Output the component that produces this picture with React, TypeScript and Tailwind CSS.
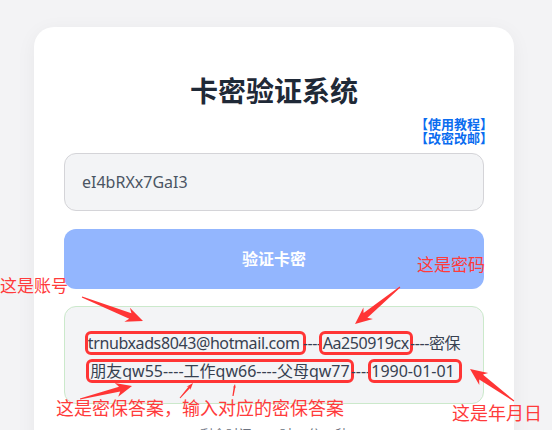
import React from "react";

type Pt = [number, number];

function arrowPoints(tail: Pt, tip: Pt, headLen: number, headW: number, neckW: number, tailW: number): string {
  const dx = tip[0] - tail[0];
  const dy = tip[1] - tail[1];
  const len = Math.hypot(dx, dy);
  const ux = dx / len;
  const uy = dy / len;
  const nx = -uy;
  const ny = ux;
  const bx = tip[0] - ux * headLen;
  const by = tip[1] - uy * headLen;
  const sx = tip[0] - ux * headLen * 0.8;
  const sy = tip[1] - uy * headLen * 0.8;
  const pts: Pt[] = [
    [tail[0] + (nx * tailW) / 2, tail[1] + (ny * tailW) / 2],
    [sx + (nx * neckW) / 2, sy + (ny * neckW) / 2],
    [bx + (nx * headW) / 2, by + (ny * headW) / 2],
    tip,
    [bx - (nx * headW) / 2, by - (ny * headW) / 2],
    [sx - (nx * neckW) / 2, sy - (ny * neckW) / 2],
    [tail[0] - (nx * tailW) / 2, tail[1] - (ny * tailW) / 2],
  ];
  return pts.map((p) => `${p[0].toFixed(1)},${p[1].toFixed(1)}`).join(" ");
}

const RED = "#ff3535";

function Arrows() {
  const arrows: { tail: Pt; tip: Pt; hl: number; hw: number; nw: number; tw: number }[] = [
    { tail: [82, 297], tip: [143, 321], hl: 17, hw: 15, nw: 6, tw: 1 },
    { tail: [400, 287], tip: [355, 324], hl: 17, hw: 15, nw: 6, tw: 1 },
    { tail: [80, 399], tip: [132, 386], hl: 16, hw: 14, nw: 5, tw: 1 },
    { tail: [180, 398], tip: [193, 383], hl: 7, hw: 5, nw: 2, tw: 1 },
    { tail: [233, 396], tip: [235, 384], hl: 4, hw: 3, nw: 1.6, tw: 1.2 },
    { tail: [514, 401], tip: [470, 369], hl: 17, hw: 15, nw: 6, tw: 1 },
  ];
  return (
    <svg className="pointer-events-none absolute left-0 top-0" width={552} height={430} viewBox="0 0 552 430">
      {arrows.map((a, i) => (
        <polygon key={i} points={arrowPoints(a.tail, a.tip, a.hl, a.hw, a.nw, a.tw)} fill={RED} />
      ))}
    </svg>
  );
}

export default function App() {
  const box = "inline-block leading-[18px] rounded-[3px] outline-3 outline-[#ff3535]";
  const cjk = { fontFamily: '"Noto Sans CJK SC", sans-serif' };
  return (
    <div
      className="relative h-[430px] w-[552px] overflow-hidden bg-[#f3f3f5]"
      style={{ fontFamily: '"Noto Sans", "Noto Sans CJK SC", sans-serif' }}
    >
      <div className="ml-[34px] mt-[27px] w-[480px] rounded-[20px] bg-white px-[30px] pb-[40px] pt-[46px] shadow-[0_4px_20px_rgba(0,0,0,0.05)]">
        <h1 className="text-center text-[28px] font-bold leading-[36px] text-[#1f2937]">卡密验证系统</h1>
        <div
          className="-mr-[9px] mt-[8px] flex flex-col items-end text-[13px] font-bold leading-[13.5px] text-[#0a6cf0]"
          style={cjk}
        >
          <span>【使用教程】</span>
          <span>【改密改邮】</span>
        </div>
        <div className="mt-[9px] flex h-[58px] items-center rounded-[12px] border border-[#d4d4d8] bg-[#f3f4f6] px-[17px] text-[16px] text-[#4b5563]">
          eI4bRXx7GaI3
        </div>
        <div className="mt-[18px] flex h-[60px] items-center justify-center rounded-[12px] bg-[#93b6fe] text-[16px] font-bold text-white">
          验证卡密
        </div>
        <div className="mt-[17px] rounded-[12px] border border-[#cbe9cb] bg-[#f3f4f6] pb-[18px] pt-[22px] text-center text-[16px] leading-[28px] text-[#374151]">
          <div className="whitespace-nowrap tracking-[-0.4px]">
            <span className={`${box} pr-[3px]`}>trnubxads8043@hotmail.com</span>
            ----
            <span className={`${box} px-[1px]`}>Aa250919cx</span>
            ----密保
          </div>
          <div className="whitespace-nowrap">
            <span className={`${box} px-[1px]`}>朋友qw55----工作qw66----父母qw77</span>
            ----
            <span className={`${box} pr-[4px]`}>1990-01-01</span>
          </div>
        </div>
        <div className="mt-[21px] text-center text-[13px] text-[#6b7280]">剩余时间：28时39分46秒</div>
      </div>

      <Arrows />

      <div className="absolute left-[0px] top-[276px] text-[17px] leading-none text-[#ff3b3b]" style={cjk}>
        这是账号
      </div>
      <div className="absolute left-[417px] top-[255px] text-[17px] leading-none text-[#ff3b3b]" style={cjk}>
        这是密码
      </div>
      <div className="absolute left-[56px] top-[398px] text-[18px] leading-none text-[#ff3b3b]" style={cjk}>
        这是密保答案，输入对应的密保答案
      </div>
      <div className="absolute left-[452px] top-[403px] text-[18px] leading-none text-[#ff3b3b]" style={cjk}>
        这是年月日
      </div>
    </div>
  );
}
